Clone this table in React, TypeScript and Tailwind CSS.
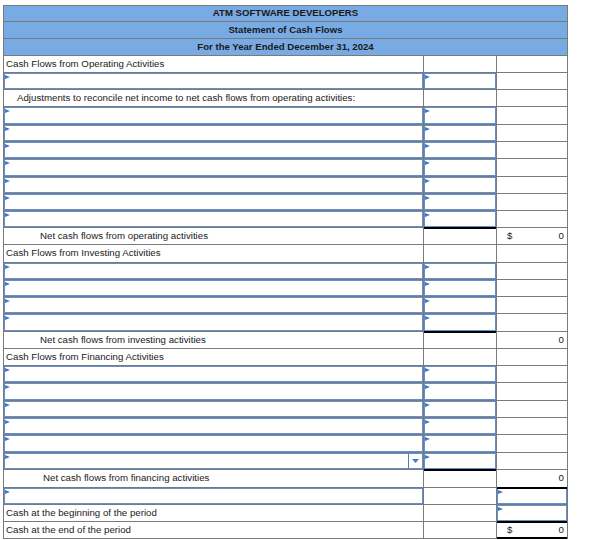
import React from "react";

type C3 = { dollar?: boolean; value?: string; input?: boolean; topBlack?: boolean; bottomBlack?: boolean };
type Row =
  | { kind: "header"; h: number; text: string }
  | {
      kind: "row";
      h: number;
      text?: string;
      indent?: number;
      c1Input?: boolean;
      dropdown?: boolean;
      c2Input?: boolean;
      c2TopBlack?: boolean;
      c3?: C3;
    };

const inp = (h: number, extra: Partial<Row & { kind: "row" }> = {}): Row => ({
  kind: "row",
  h,
  c1Input: true,
  c2Input: true,
  ...extra,
});

const rows: Row[] = [
  { kind: "header", h: 16, text: "ATM SOFTWARE DEVELOPERS" },
  { kind: "header", h: 17, text: "Statement of Cash Flows" },
  { kind: "header", h: 17, text: "For the Year Ended December 31, 2024" },
  { kind: "row", h: 17, text: "Cash Flows from Operating Activities" },
  inp(17),
  { kind: "row", h: 17, text: "Adjustments to reconcile net income to net cash flows from operating activities:", indent: 11 },
  inp(18),
  inp(17),
  inp(17),
  inp(18),
  inp(17),
  inp(17),
  inp(17),
  { kind: "row", h: 17, text: "Net cash flows from operating activities", indent: 34, c2TopBlack: true, c3: { dollar: true, value: "0" } },
  { kind: "row", h: 18, text: "Cash Flows from Investing Activities" },
  inp(17),
  inp(17),
  inp(17),
  inp(18),
  { kind: "row", h: 17, text: "Net cash flows from investing activities", indent: 34, c2TopBlack: true, c3: { value: "0" } },
  { kind: "row", h: 17, text: "Cash Flows from Financing Activities" },
  inp(17),
  inp(18),
  inp(17),
  inp(17),
  inp(18),
  inp(17, { dropdown: true }),
  { kind: "row", h: 18, text: "Net cash flows from financing activities", indent: 37, c2TopBlack: true, c3: { value: "0" } },
  { kind: "row", h: 17, c1Input: true, c3: { input: true, topBlack: true } },
  { kind: "row", h: 17, text: "Cash at the beginning of the period", c3: { input: true } },
  { kind: "row", h: 17, text: "Cash at the end of the period", c3: { dollar: true, value: "0", topBlack: true, bottomBlack: true } },
];

function Flag() {
  return (
    <svg className="absolute left-[0px] top-[1px]" width="5" height="4" viewBox="0 0 5 4">
      <polygon points="0,0 5,2 0,4" fill="#3f78c6" />
    </svg>
  );
}

function InputBox({ dropdown }: { dropdown?: boolean }) {
  return (
    <div className="relative h-full w-full border-[1.5px] border-[#6390cc] bg-white">
      <Flag />
      {dropdown && (
        <div className="absolute right-0 top-0 flex h-full w-[14px] items-center justify-center border-l border-[#4a7cc0]">
          <svg width="7" height="4" viewBox="0 0 7 4">
            <polygon points="0,0 7,0 3.5,4" fill="#4a7cc0" />
          </svg>
        </div>
      )}
    </div>
  );
}

function BlackTop() {
  return <div className="absolute left-0 right-0 top-[-1px] h-[2px] bg-black" />;
}

export default function App() {
  return (
    <div
      className="bg-white pl-[3px] pt-[5px] text-[#1a1a1a]"
      style={{ fontFamily: '"Liberation Sans", Arial, sans-serif' }}
    >
      <div className="flex w-[565px] flex-col border-l border-t border-[#7a7a7a]">
        {rows.map((r, i) => {
          if (r.kind === "header") {
            return (
              <div
                key={i}
                style={{ height: r.h }}
                className="flex items-center justify-center border-b border-r border-[#7a7a7a] bg-[#78aae4] text-[9.6px] font-bold"
              >
                {r.text}
              </div>
            );
          }
          return (
            <div key={i} style={{ height: r.h }} className="flex">
              <div className="relative flex w-[420px] items-center border-b border-r border-[#7a7a7a] text-[9.7px]">
                {r.c1Input ? (
                  <InputBox dropdown={r.dropdown} />
                ) : (
                  <span style={{ paddingLeft: (r.indent ?? 0) + 2 }} className="whitespace-nowrap">
                    {r.text}
                  </span>
                )}
              </div>
              <div className="relative flex w-[73px] items-center border-b border-r border-[#7a7a7a]">
                {r.c2Input && <InputBox />}
                {r.c2TopBlack && <BlackTop />}
              </div>
              <div className="relative flex w-[71px] items-center justify-between border-b border-r border-[#7a7a7a] text-[9.7px]">
                {r.c3?.input ? (
                  <InputBox />
                ) : (
                  <>
                    <span className="pl-[10px]">{r.c3?.dollar ? "$" : ""}</span>
                    <span className="pr-[3px]">{r.c3?.value ?? ""}</span>
                  </>
                )}
                {r.c3?.topBlack && <BlackTop />}
                {r.c3?.bottomBlack && <div className="absolute bottom-[-1px] left-0 right-0 h-[2px] bg-black" />}
              </div>
            </div>
          );
        })}
      </div>
    </div>
  );
}
